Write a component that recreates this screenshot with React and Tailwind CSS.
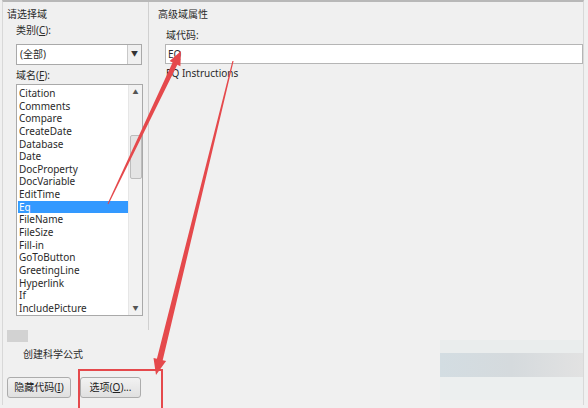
import React from 'react';

const fields = [
  'Citation', 'Comments', 'Compare', 'CreateDate', 'Database', 'Date', 'DocProperty',
  'DocVariable', 'EditTime', 'Eq', 'FileName', 'FileSize', 'Fill-in', 'GoToButton',
  'GreetingLine', 'Hyperlink', 'If', 'IncludePicture',
];

// tapered arrow polygon from tail to tip
function arrowPoints(tail, tip, tailHalf, shaftHalf, headHalf, headLen) {
  const dx = tip[0] - tail[0];
  const dy = tip[1] - tail[1];
  const len = Math.hypot(dx, dy);
  const ux = dx / len, uy = dy / len;
  const nx = -uy, ny = ux;
  const bx = tip[0] - ux * headLen, by = tip[1] - uy * headLen;
  const pts = [
    [tail[0] + nx * tailHalf, tail[1] + ny * tailHalf],
    [bx + nx * shaftHalf, by + ny * shaftHalf],
    [bx + nx * headHalf, by + ny * headHalf],
    tip,
    [bx - nx * headHalf, by - ny * headHalf],
    [bx - nx * shaftHalf, by - ny * shaftHalf],
    [tail[0] - nx * tailHalf, tail[1] - ny * tailHalf],
  ];
  return pts.map((p) => p.map((v) => v.toFixed(1)).join(',')).join(' ');
}

function ListBox() {
  return (
    <div className="flex w-[127px] h-[232px] border border-[#a9a9a9] bg-white">
      <div className="flex-1 pt-[2px] pl-[1px] overflow-hidden">
        {fields.map((f) => (
          <div
            key={f}
            className={
              'h-[12.65px] leading-[12.65px] pl-[1px] whitespace-nowrap ' +
              (f === 'Eq' ? 'bg-[#3399ff] text-white' : 'text-[#2a2a2a]')
            }
          >
            {f}
          </div>
        ))}
      </div>
      <div className="w-[14px] flex flex-col items-center bg-[#f2f2f2] border-l border-[#e6e6e6]">
        <div className="h-[14px] flex items-center justify-center text-[6px] text-[#555]">▲</div>
        <div className="mt-[36px] w-[12px] h-[44px] bg-[#e4e4e4] border border-[#bcbcbc] rounded-[2px]" />
        <div className="flex-1" />
        <div className="h-[14px] flex items-center justify-center text-[6px] text-[#555]">▼</div>
      </div>
    </div>
  );
}

function Button({ children, w }) {
  return (
    <div
      className={
        w +
        ' h-[21px] flex items-center justify-center border border-[#acacac] rounded-[3px] bg-gradient-to-b from-[#f2f2f2] to-[#e0e0e0] text-[#222]'
      }
    >
      {children}
    </div>
  );
}

export default function App() {
  return (
    <div className="relative w-[588px] h-[408px] overflow-hidden bg-[#f0f0f0] text-[10px] font-['Noto_Sans','Noto_Sans_CJK_SC',sans-serif] text-[#2a2a2a]">
      <div className="h-[405px] mx-[2px] w-[582px] border-t-2 border-[#b8b8b8] border-l border-r border-l-[#d8d8d8] border-r-[#d8d8d8] flex flex-col">
        <div className="flex h-[328px]">
          {/* left group */}
          <div className="w-[148px] pl-[4px] pt-[5px] border-r border-[#d0d0d0]">
            <div className="leading-[14px]">请选择域</div>
            <div className="pl-[9px] mt-[2px] leading-[14px]">类别(<span className="underline">C</span>):</div>
            <div className="ml-[9px] mt-[7px] w-[126px] h-[21px] flex border border-[#a9a9a9] bg-white">
              <div className="flex-1 pl-[3px] leading-[19px]">(全部)</div>
              <div className="w-[14px] border-l border-[#c8c8c8] bg-[#f0f0f0] flex items-center justify-center text-[7px] text-[#333]">▼</div>
            </div>
            <div className="pl-[9px] mt-[3px] leading-[14px]">域名(<span className="underline">F</span>):</div>
            <div className="ml-[9px] mt-[2px]">
              <ListBox />
            </div>
          </div>
          {/* right group */}
          <div className="flex-1 pl-[9px] pt-[5px]">
            <div className="leading-[14px]">高级域属性</div>
            <div className="pl-[8px] mt-[7px] leading-[14px]">域代码:</div>
            <div className="ml-[7px] mt-[2px] h-[20px] w-[418px] border border-[#b5b5b5] bg-white pl-[2px] leading-[18px]">EQ</div>
            <div className="pl-[8px] mt-[2px] leading-[14px]">EQ Instructions</div>
          </div>
        </div>
        {/* bottom */}
        <div className="pl-[4px]">
          <div className="w-[21px] h-[12px] bg-[#d2d2d2]" />
          <div className="pl-[16px] mt-[5px] leading-[14px]">创建科学公式</div>
          <div className="flex gap-[9px] mt-[16px]">
            <Button w="w-[64px]">隐藏代码(<span className="underline">I</span>)</Button>
            <Button w="w-[61px]">选项(<span className="underline">O</span>)...</Button>
          </div>
        </div>
      </div>

      {/* faded leftover tooltip */}
      <div className="absolute left-[440px] top-[340px] w-[143px] h-[60px] flex flex-col pointer-events-none">
        <div className="h-[13px] bg-[#eaeded]" />
        <div className="h-[24px] bg-gradient-to-r from-[#d3dde2] via-[#d5dadd] to-[#e2e2e2]" />
        <div className="flex-1 bg-[#ecefef]" />
      </div>

      {/* annotation box */}
      <div className="absolute left-[78px] top-[369px] w-[85px] h-[42px] border-2 border-[#e5494c] pointer-events-none" />

      {/* annotation arrows */}
      <svg className="absolute left-0 top-0 pointer-events-none" width="588" height="408">
        <polygon
          points={arrowPoints([108, 204], [181, 51], 0.6, 2.6, 6, 14)}
          fill="#e5494c"
        />
        <polygon
          points={arrowPoints([233, 61], [156, 375], 0.6, 3, 6.5, 16)}
          fill="#e5494c"
        />
      </svg>
    </div>
  );
}
